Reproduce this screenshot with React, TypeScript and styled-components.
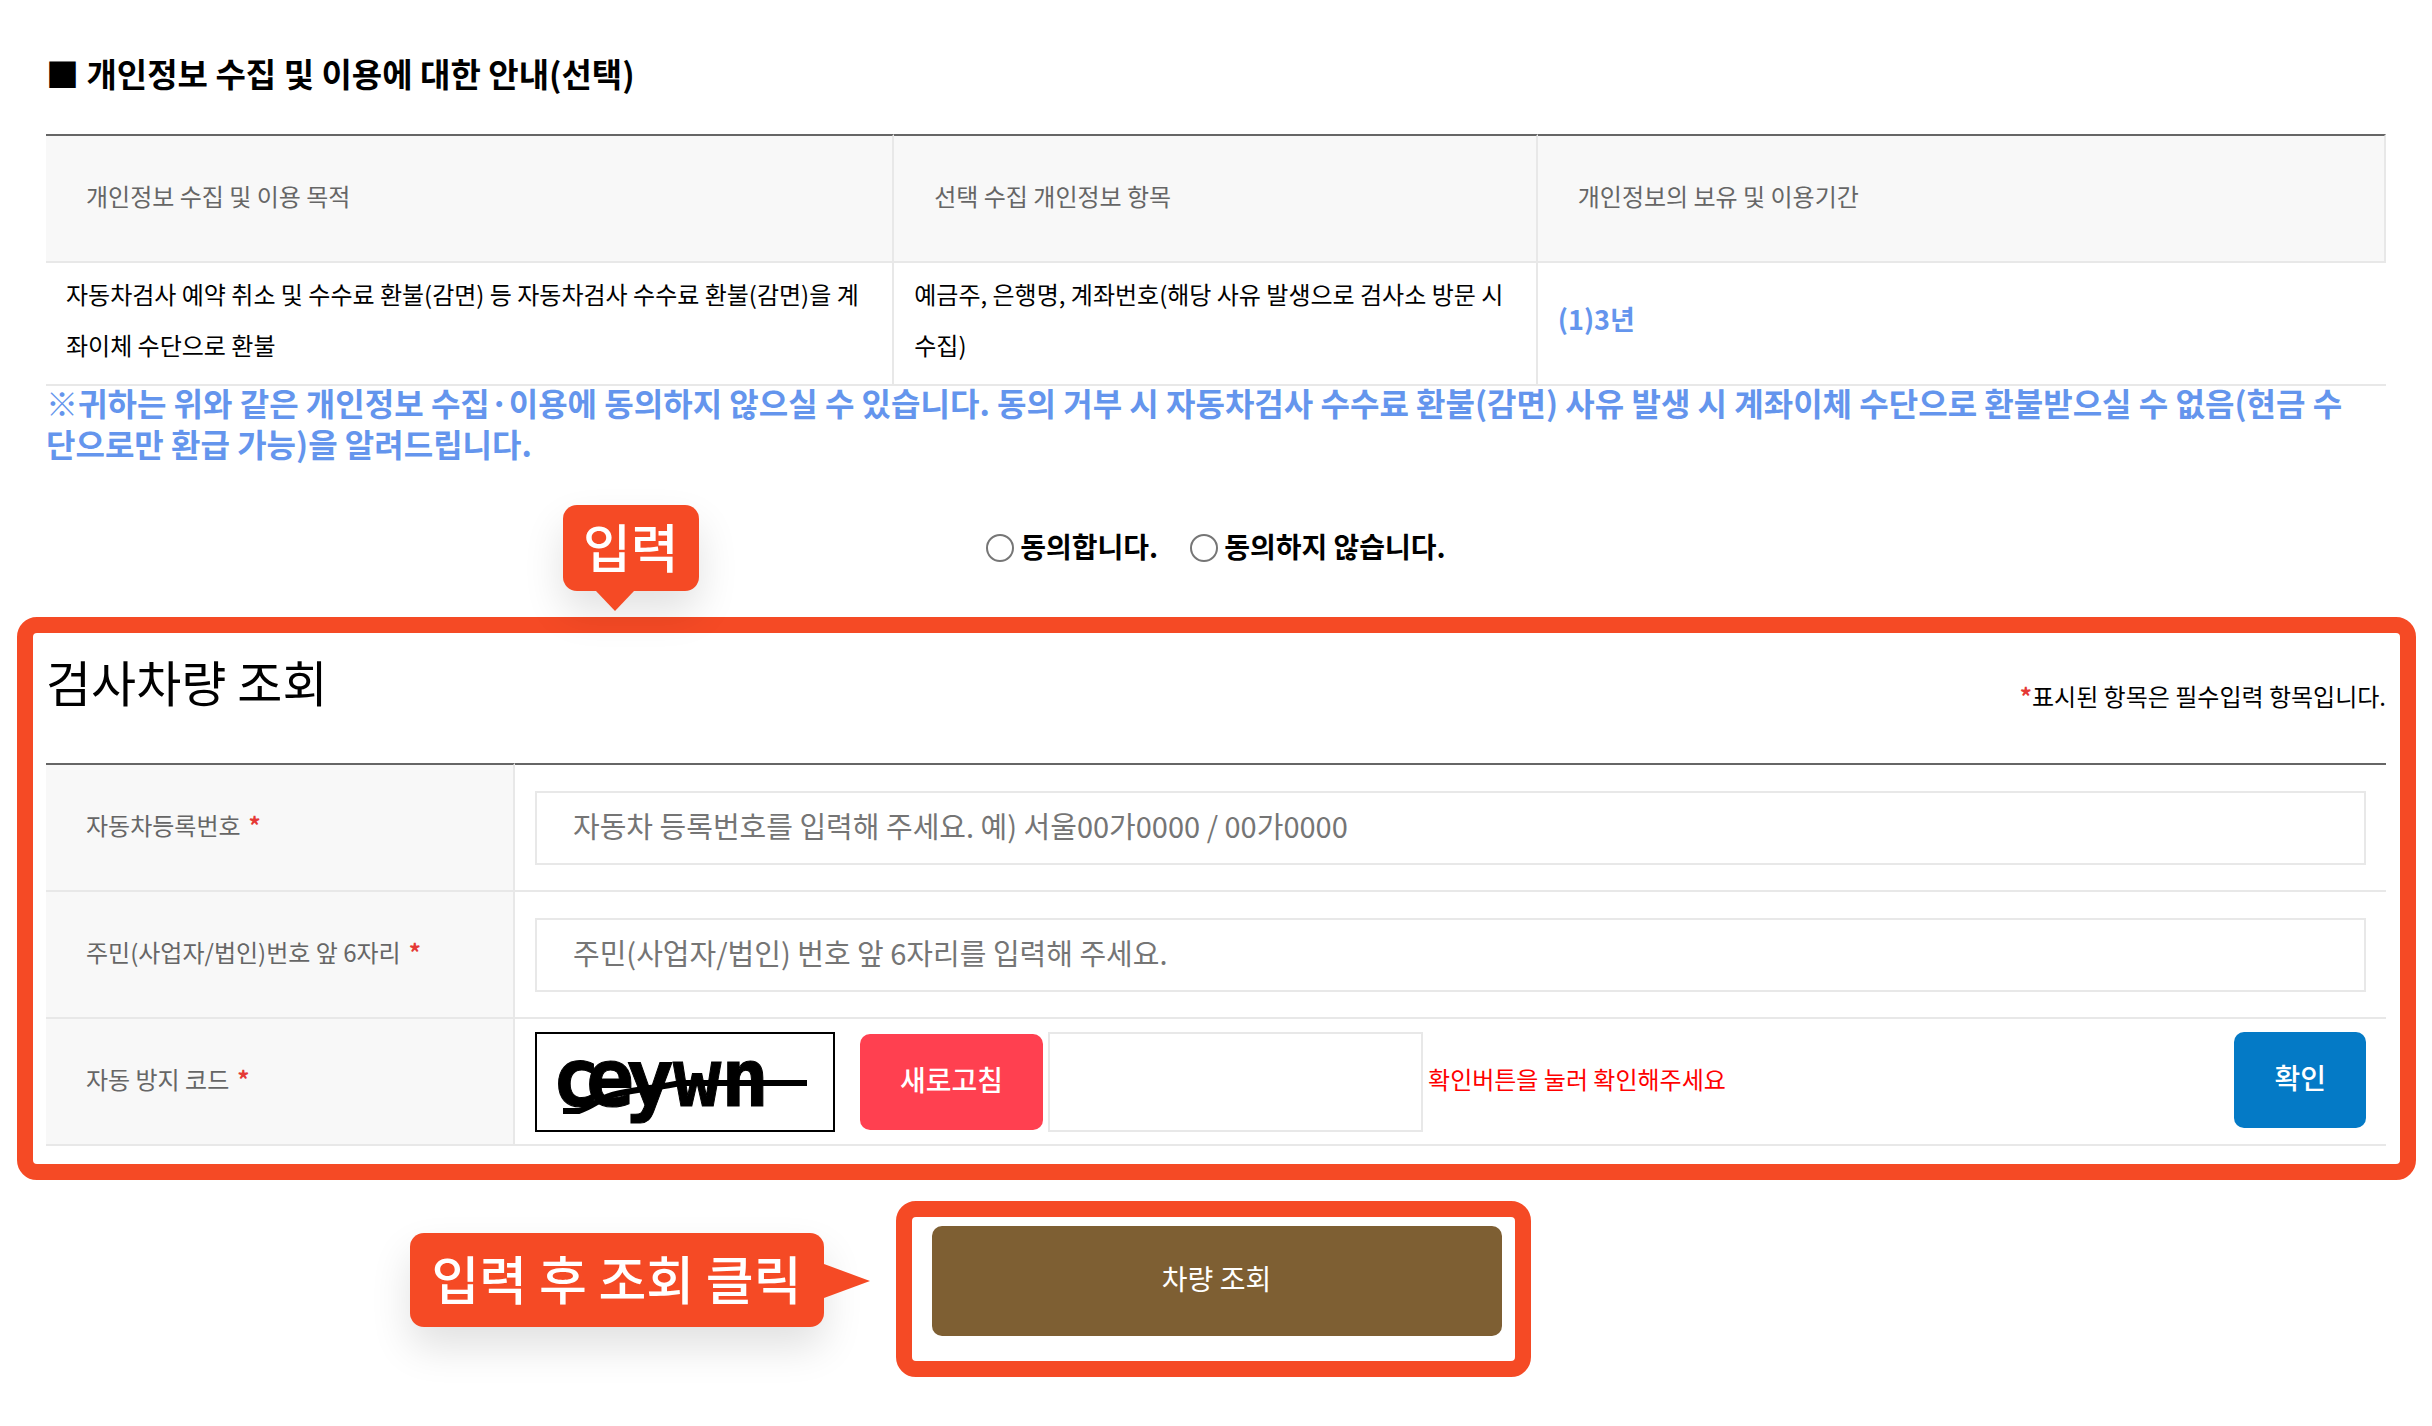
import React from "react";
import styled, { createGlobalStyle, css } from "styled-components";

const accent = "#f54a25";
const line = "#e8e8e8";
const blue = "#6495ed";

const GlobalStyle = createGlobalStyle`
  *, *::before, *::after { box-sizing: border-box; }
  body {
    margin: 0;
    background: #fff;
    color: #000;
    font-family: "Noto Sans CJK KR", "Noto Sans", sans-serif;
    font-size: 24px;
  }
  button, input { font: inherit; }
`;

const Page = styled.main`
  padding: 48px 16px 48px 17px;
`;

const Consent = styled.section`
  padding: 0 30px 0 29px;
`;

const ConsentTitle = styled.h2`
  margin: 0 0 36px;
  font-size: 33px;
  line-height: 50px;
  font-weight: 700;
`;

const Table = styled.table`
  width: 100%;
  table-layout: fixed;
  border-collapse: separate;
  border-spacing: 0;
`;

const Col = styled.col<{ $width?: string }>`
  width: ${({ $width }) => $width ?? "auto"};
`;

const ruleTop = css`
  border-top: 2px solid #666;
`;

const HeadCell = styled.th`
  ${ruleTop}
  height: 129px;
  padding: 0 40px 6px;
  border-right: 2px solid ${line};
  border-bottom: 2px solid ${line};
  background: #f8f8f8;
  color: #666;
  font-weight: 400;
  line-height: 36px;
  text-align: left;
`;

const BodyCell = styled.td`
  padding: 5px 20px 14px;
  border-right: 2px solid ${line};
  border-bottom: 2px solid ${line};
  line-height: 51px;
  &:last-child { border-right: 0; }
`;

const Period = styled.strong`
  color: ${blue};
  font-size: 27px;
`;

const Notice = styled.p`
  margin: -4px 0 0;
  color: ${blue};
  font-size: 32px;
  font-weight: 700;
  line-height: 41px;
`;

const Choices = styled.div`
  display: flex;
  justify-content: center;
  gap: 32px;
  margin: 60px 0 49px;
`;

const Choice = styled.label`
  display: flex;
  align-items: center;
  gap: 6px;
  font-size: 28px;
  font-weight: 700;
  line-height: 44px;
`;

const Radio = styled.input`
  appearance: none;
  width: 28px;
  height: 28px;
  margin: 4px 0 0;
  border: 2px solid #767676;
  border-radius: 50%;
  background: #fff;
  &:checked { border: 8px solid #0075ff; }
`;

const framed = css`
  border: 16px solid ${accent};
  border-radius: 20px;
`;

const Lookup = styled.section`
  ${framed}
  position: relative;
  padding: 12px 14px 18px 13px;
`;

const LookupHeader = styled.header`
  display: flex;
  justify-content: space-between;
  align-items: flex-end;
  height: 118px;
  padding-bottom: 44px;
`;

const LookupTitle = styled.h1`
  margin: 0;
  font-size: 49px;
  font-weight: 400;
  line-height: 76px;
`;

const Required = styled.span`
  color: #e53935;
  font-weight: 700;
`;

const RequiredNote = styled.p`
  margin: 0;
  line-height: 46px;
`;

const LabelCell = styled.th`
  height: 127px;
  padding: 0 40px 6px;
  border-right: 2px solid ${line};
  border-bottom: 2px solid ${line};
  background: #f8f8f8;
  color: #666;
  font-weight: 400;
  line-height: 36px;
  text-align: left;
  tr:first-child > & { ${ruleTop} height: 129px; }
  ${Required} { margin-left: 8px; }
`;

const FieldCell = styled.td`
  padding: 0 20px;
  border-bottom: 2px solid ${line};
  tr:first-child > & { ${ruleTop} }
`;

const TextInput = styled.input`
  display: block;
  width: 100%;
  height: 74px;
  padding: 0 36px 6px;
  border: 2px solid ${line};
  background: #fff;
  font-size: 29px;
  &::placeholder { color: #757575; opacity: 1; }
`;

const CodeRow = styled.div`
  display: flex;
  align-items: center;
`;

const Captcha = styled.svg`
  flex: none;
  width: 300px;
  height: 100px;
  margin-right: 25px;
  border: 2px solid #000;
`;

const CodeInput = styled(TextInput)`
  width: 375px;
  height: 100px;
  margin: 0 5px;
`;

const CodeMessage = styled.span`
  flex: 1;
  padding-bottom: 6px;
  color: #f00;
`;

const Button = styled.button<{ $tone: string }>`
  height: 96px;
  padding: 0 40px 6px;
  border: 0;
  border-radius: 10px;
  background: ${({ $tone }) => $tone};
  color: #fff;
  font-size: 28px;
  font-weight: 500;
  white-space: nowrap;
  cursor: pointer;
`;

const ConfirmButton = styled(Button)`
  align-self: flex-start;
`;

const SubmitRow = styled.div`
  display: flex;
  justify-content: center;
  margin-top: 21px;
`;

const SubmitFrame = styled.div`
  ${framed}
  position: relative;
  margin-right: 7px;
  padding: 9px 13px 25px 20px;
`;

const SubmitButton = styled(Button)`
  width: 570px;
  height: 110px;
  font-weight: 400;
`;

const Callout = styled.span`
  position: absolute;
  padding: 0 20px 4px;
  border-radius: 14px;
  background: ${accent};
  box-shadow: 0 20px 40px rgba(0, 0, 0, 0.12);
  color: #fff;
  font-size: 52px;
  font-weight: 500;
  white-space: nowrap;
  &::after {
    content: "";
    position: absolute;
    border: 0 solid transparent;
  }
`;

const CalloutDown = styled(Callout)`
  left: 530px;
  bottom: calc(100% + 42px);
  line-height: 82px;
  &::after {
    top: 100%;
    left: 33px;
    border-width: 20px 19px 0;
    border-top-color: ${accent};
  }
`;

const CalloutRight = styled(Callout)`
  right: calc(100% + 88px);
  top: 16px;
  padding: 0 22px 4px;
  line-height: 90px;
  &::after {
    top: 31px;
    left: 100%;
    border-width: 17px 0 17px 46px;
    border-left-color: ${accent};
  }
`;

const captchaLetters: [string, number][] = [
  ["c", 15],
  ["e", 49],
  ["y", 89],
  ["w", 136],
  ["n", 184],
];

function CaptchaImage() {
  return (
    <Captcha viewBox="0 0 296 96" role="img" aria-label="자동 방지 코드">
      <g
        fontFamily="'DejaVu Sans Mono', monospace"
        fontWeight="700"
        fontSize="80"
        stroke="#000"
        strokeWidth="1"
      >
        {captchaLetters.map(([letter, x]) => (
          <text key={letter} x={x} y={72}>
            {letter}
          </text>
        ))}
      </g>
      <path
        d="M26 77H42C54 73 62 66 72 62C92 56 118 54 144 49H270"
        fill="none"
        stroke="#000"
        strokeWidth="6"
      />
    </Captcha>
  );
}

export default function App() {
  return (
    <>
      <GlobalStyle />
      <Page>
        <Consent>
          <ConsentTitle>■ 개인정보 수집 및 이용에 대한 안내(선택)</ConsentTitle>
          <Table>
            <colgroup>
              <Col $width="36.25%" />
              <Col $width="27.5%" />
              <Col />
            </colgroup>
            <thead>
              <tr>
                <HeadCell scope="col">개인정보 수집 및 이용 목적</HeadCell>
                <HeadCell scope="col">선택 수집 개인정보 항목</HeadCell>
                <HeadCell scope="col">개인정보의 보유 및 이용기간</HeadCell>
              </tr>
            </thead>
            <tbody>
              <tr>
                <BodyCell>
                  자동차검사 예약 취소 및 수수료 환불(감면) 등 자동차검사 수수료 환불(감면)을 계좌이체 수단으로 환불
                </BodyCell>
                <BodyCell>예금주, 은행명, 계좌번호(해당 사유 발생으로 검사소 방문 시 수집)</BodyCell>
                <BodyCell>
                  <Period>(1)3년</Period>
                </BodyCell>
              </tr>
            </tbody>
          </Table>
          <Notice>
            ※귀하는 위와 같은 개인정보 수집·이용에 동의하지 않으실 수 있습니다. 동의 거부 시 자동차검사 수수료
            환불(감면) 사유 발생 시 계좌이체 수단으로 환불받으실 수 없음(현금 수
            <br />
            단으로만 환급 가능)을 알려드립니다.
          </Notice>
          <Choices role="radiogroup" aria-label="개인정보 수집 및 이용 동의">
            <Choice>
              <Radio type="radio" name="agree" value="y" />
              동의합니다.
            </Choice>
            <Choice>
              <Radio type="radio" name="agree" value="n" />
              동의하지 않습니다.
            </Choice>
          </Choices>
        </Consent>

        <Lookup>
          <CalloutDown>입력</CalloutDown>
          <LookupHeader>
            <LookupTitle>검사차량 조회</LookupTitle>
            <RequiredNote>
              <Required>*</Required>표시된 항목은 필수입력 항목입니다.
            </RequiredNote>
          </LookupHeader>
          <Table>
            <colgroup>
              <Col $width="469px" />
              <Col />
            </colgroup>
            <tbody>
              <tr>
                <LabelCell scope="row">
                  <label htmlFor="carNo">자동차등록번호</label>
                  <Required>*</Required>
                </LabelCell>
                <FieldCell>
                  <TextInput
                    id="carNo"
                    type="text"
                    placeholder="자동차 등록번호를 입력해 주세요. 예) 서울00가0000 / 00가0000"
                  />
                </FieldCell>
              </tr>
              <tr>
                <LabelCell scope="row">
                  <label htmlFor="ownerNo">주민(사업자/법인)번호 앞 6자리</label>
                  <Required>*</Required>
                </LabelCell>
                <FieldCell>
                  <TextInput
                    id="ownerNo"
                    type="text"
                    placeholder="주민(사업자/법인) 번호 앞 6자리를 입력해 주세요."
                  />
                </FieldCell>
              </tr>
              <tr>
                <LabelCell scope="row">
                  <label htmlFor="code">자동 방지 코드</label>
                  <Required>*</Required>
                </LabelCell>
                <FieldCell>
                  <CodeRow>
                    <CaptchaImage />
                    <Button type="button" $tone="#ff4050">
                      새로고침
                    </Button>
                    <CodeInput id="code" type="text" />
                    <CodeMessage>확인버튼을 눌러 확인해주세요</CodeMessage>
                    <ConfirmButton type="button" $tone="#047ac6">
                      확인
                    </ConfirmButton>
                  </CodeRow>
                </FieldCell>
              </tr>
            </tbody>
          </Table>
        </Lookup>

        <SubmitRow>
          <SubmitFrame>
            <CalloutRight>입력 후 조회 클릭</CalloutRight>
            <SubmitButton type="submit" $tone="#7e5f33">
              차량 조회
            </SubmitButton>
          </SubmitFrame>
        </SubmitRow>
      </Page>
    </>
  );
}
